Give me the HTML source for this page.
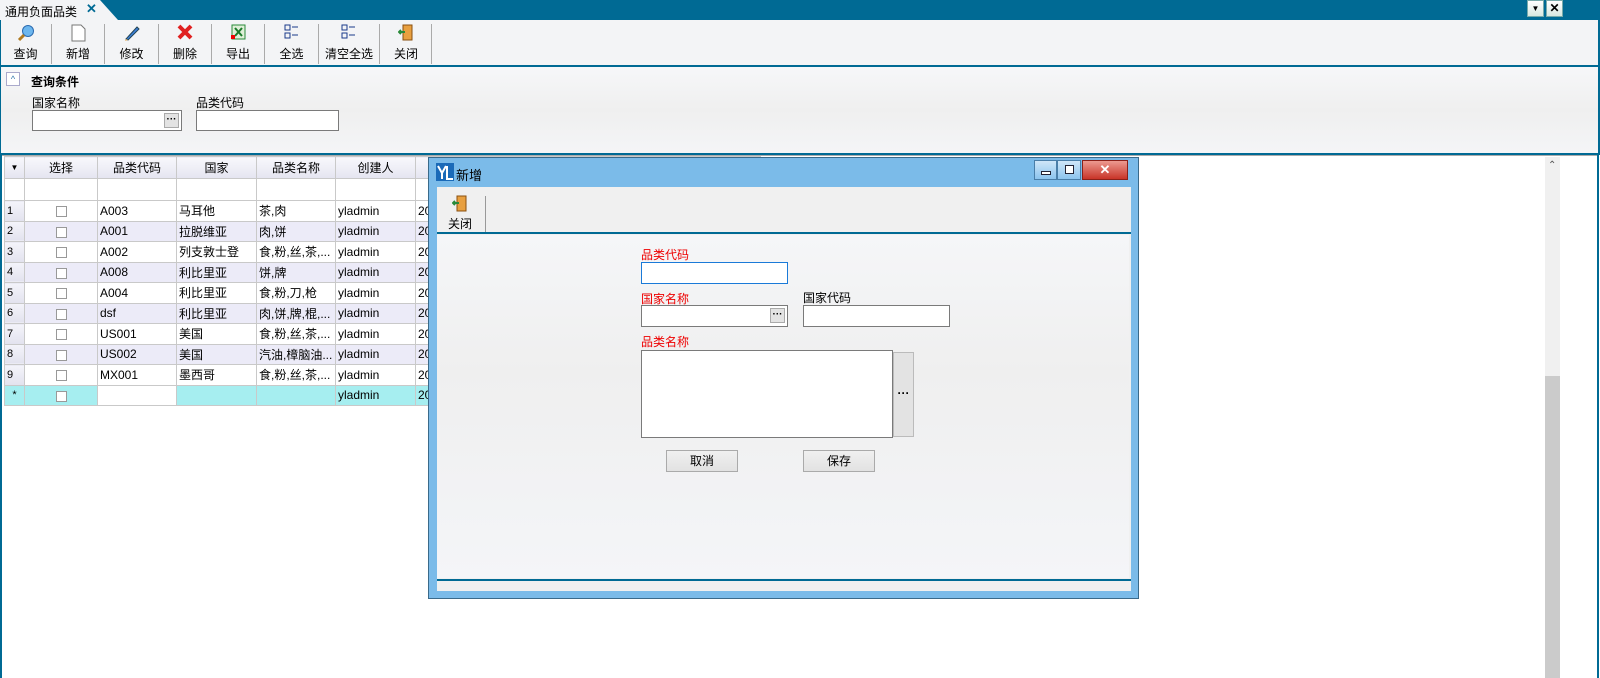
<!DOCTYPE html>
<html><head><meta charset="utf-8"><style>
*{box-sizing:border-box;margin:0;padding:0}
body{width:1600px;height:678px;position:relative;overflow:hidden;background:#fff;font-family:"Liberation Sans","Noto Sans CJK SC",sans-serif;font-size:12px;color:#000}
.a{position:absolute}
.tb{left:0;top:0;width:1600px;height:20px;background:#006a94}
.tab{left:0;top:0;width:118px;height:20px;background:#f3f4f6;clip-path:polygon(0 0,100px 0,118px 20px,0 20px)}
.btn{position:absolute;top:22px;height:42px;text-align:center;font-size:12px}
.btn .t{position:absolute;bottom:2px;left:0;right:0}
.sep{position:absolute;top:24px;width:1px;height:40px;background:#aaa}
.hl{background:#006a94;height:2px}
input{font:inherit}
.box{position:absolute;background:#fff;border:1px solid #7a7a7a}
.dots{position:absolute;background:#e3e3e3;border:1px solid #aaa;font-size:10px;text-align:center;line-height:12px;font-weight:bold}
table{border-collapse:collapse;position:absolute;left:4px;top:156px;table-layout:fixed}
td{border:1px solid #c9c9c9;height:20.5px;padding:0 2px;white-space:nowrap;overflow:hidden;font-size:12px}
.hd td{background:linear-gradient(#f8f8fc,#e4e4f0);text-align:center;height:22px}
.flt td{background:#fff;height:22px}
.ri{background:linear-gradient(#f4f4fa,#e2e2ee);font-size:11px;padding-left:2px}
.ev td{background:#ecebf8}
.ev td.ri{background:linear-gradient(#f4f4fa,#e2e2ee)}
.nw td{background:#a6eef0}
.cb{display:inline-block;width:11px;height:11px;border:1px solid #999;background:#fff;vertical-align:middle}
.red{color:#e00}
.gb{position:absolute;background:linear-gradient(#f0f0f0,#e2e2e2);border:1px solid #aaa;text-align:center;line-height:20px}
</style></head><body>
<div class="a tb"></div>
<div class="a tab"></div>
<div class="a" style="left:5px;top:3px;font-size:12px">通用负面品类</div>
<div class="a" style="left:86px;top:1px;color:#006a94;font-weight:bold;font-size:13px">✕</div>
<div class="a" style="left:1527px;top:0;width:17px;height:17px;background:linear-gradient(#fff,#d8e8e0);border:1px solid #7aa;font-size:8px;text-align:center;line-height:15px">▼</div>
<div class="a" style="left:1546px;top:0;width:17px;height:17px;background:linear-gradient(#fff,#d8e8e0);border:1px solid #7aa;font-weight:bold;text-align:center;line-height:15px">✕</div>
<div class="a" style="left:0;top:20px;width:1600px;height:45px;background:#f3f4f6;border-left:1px solid #006a94;border-right:2px solid #006a94"></div>
<div class="btn" style="left:0;width:51px"><svg class="a" style="left:17px;top:2px" width="18" height="18"><circle cx="11" cy="7" r="5.5" fill="#6cb6ee" stroke="#2a6ab0"/><path d="M7 11L2 16" stroke="#b07a20" stroke-width="3"/></svg><div class="t">查询</div></div>
<div class="sep" style="left:51px"></div>
<div class="btn" style="left:52px;width:52px"><svg class="a" style="left:19px;top:2px" width="16" height="18"><path d="M1 1h9l4 4v12H1z" fill="#fff" stroke="#777"/></svg><div class="t">新增</div></div>
<div class="sep" style="left:104px"></div>
<div class="btn" style="left:105px;width:53px"><svg class="a" style="left:18px;top:2px" width="18" height="18"><path d="M3 15L14 3l2 2L5 16z" fill="#3b7fd8" stroke="#245"/><path d="M3 15l-1 2 3-1z" fill="#e8b060"/></svg><div class="t">修改</div></div>
<div class="sep" style="left:158px"></div>
<div class="btn" style="left:159px;width:52px"><svg class="a" style="left:18px;top:2px" width="16" height="16"><path d="M2 2L14 14M14 2L2 14" stroke="#e02020" stroke-width="4"/></svg><div class="t">删除</div></div>
<div class="sep" style="left:211px"></div>
<div class="btn" style="left:212px;width:52px"><svg class="a" style="left:18px;top:2px" width="16" height="18"><rect x="2" y="1" width="13" height="14" fill="#dff0d8" stroke="#2a8a3a"/><path d="M5 4l7 8M12 4l-7 8" stroke="#1a7a2a" stroke-width="2"/><rect x="1" y="11" width="4" height="4" fill="#e00"/></svg><div class="t">导出</div></div>
<div class="sep" style="left:264px"></div>
<div class="btn" style="left:265px;width:53px"><svg class="a" style="left:19px;top:2px" width="16" height="16"><rect x="1" y="1" width="5" height="5" fill="none" stroke="#1a3a8a"/><rect x="1" y="9" width="5" height="5" fill="none" stroke="#1a3a8a"/><path d="M8 3h6M8 11h6" stroke="#1a3a8a"/></svg><div class="t">全选</div></div>
<div class="sep" style="left:318px"></div>
<div class="btn" style="left:319px;width:60px"><svg class="a" style="left:22px;top:2px" width="16" height="16"><rect x="1" y="1" width="5" height="5" fill="none" stroke="#1a3a8a"/><rect x="1" y="9" width="5" height="5" fill="none" stroke="#1a3a8a"/><path d="M8 3h6M8 11h6" stroke="#1a3a8a"/></svg><div class="t">清空全选</div></div>
<div class="sep" style="left:379px"></div>
<div class="btn" style="left:380px;width:52px"><svg class="a" style="left:18px;top:2px" width="16" height="18"><rect x="5" y="1" width="9" height="15" fill="#e8a040" stroke="#8a5010"/><path d="M1 8h6M3 6L1 8l2 2" stroke="#2a8a3a" stroke-width="2" fill="none"/></svg><div class="t">关闭</div></div>
<div class="sep" style="left:431px"></div>
<div class="a hl" style="left:0;top:65px;width:1600px"></div>
<div class="a" style="left:0;top:67px;width:1600px;height:86px;background:linear-gradient(#f6f7f9,#efefef 50%,#f4f5f7);border-left:1px solid #006a94;border-right:2px solid #006a94"></div>
<div class="a" style="left:6px;top:72px;width:14px;height:14px;border:1px solid #aac;background:#fff;font-size:9px;text-align:center;line-height:12px;color:#37a">^</div>
<div class="a" style="left:31px;top:73px;font-weight:bold">查询条件</div>
<div class="a" style="left:32px;top:94px">国家名称</div>
<div class="box" style="left:32px;top:110px;width:150px;height:21px"></div>
<div class="dots" style="left:164px;top:113px;width:15px;height:15px">···</div>
<div class="a" style="left:196px;top:94px">品类代码</div>
<div class="box" style="left:196px;top:110px;width:143px;height:21px"></div>
<div class="a hl" style="left:0;top:153px;width:1600px"></div>
<div class="a" style="left:0;top:155px;width:2px;height:523px;background:#006a94"></div>
<div class="a" style="left:1597px;top:155px;width:2px;height:523px;background:#006a94"></div>
<div class="a" style="left:2px;top:155px;width:1595px;height:1px;background:#aaa"></div>
<div class="a" style="left:1545px;top:157px;width:15px;height:521px;background:#f0f0f0"></div>
<div class="a" style="left:1545px;top:376px;width:15px;height:302px;background:#cbcbcb"></div>
<div class="a" style="left:1548px;top:160px;font-size:10px;color:#555">⌃</div>
<table>
<colgroup><col style="width:20px"><col style="width:73px"><col style="width:79px"><col style="width:80px"><col style="width:79px"><col style="width:80px"><col style="width:117px"><col style="width:80px"><col style="width:148px"></colgroup>
<tr class="hd"><td style="font-size:8px">▼</td><td>选择</td><td>品类代码</td><td>国家</td><td>品类名称</td><td>创建人</td><td></td><td></td><td></td></tr>
<tr class="flt"><td class="ri"></td><td></td><td></td><td></td><td></td><td></td><td></td><td></td><td></td></tr>
<tr><td class="ri">1</td><td align="center"><span class="cb"></span></td><td>A003</td><td>马耳他</td><td>茶,肉</td><td>yladmin</td><td>20</td><td></td><td></td></tr>
<tr class="ev"><td class="ri">2</td><td align="center"><span class="cb"></span></td><td>A001</td><td>拉脱维亚</td><td>肉,饼</td><td>yladmin</td><td>20</td><td></td><td></td></tr>
<tr><td class="ri">3</td><td align="center"><span class="cb"></span></td><td>A002</td><td>列支敦士登</td><td>食,粉,丝,茶,...</td><td>yladmin</td><td>20</td><td></td><td></td></tr>
<tr class="ev"><td class="ri">4</td><td align="center"><span class="cb"></span></td><td>A008</td><td>利比里亚</td><td>饼,牌</td><td>yladmin</td><td>20</td><td></td><td></td></tr>
<tr><td class="ri">5</td><td align="center"><span class="cb"></span></td><td>A004</td><td>利比里亚</td><td>食,粉,刀,枪</td><td>yladmin</td><td>20</td><td></td><td></td></tr>
<tr class="ev"><td class="ri">6</td><td align="center"><span class="cb"></span></td><td>dsf</td><td>利比里亚</td><td>肉,饼,牌,棍,...</td><td>yladmin</td><td>20</td><td></td><td></td></tr>
<tr><td class="ri">7</td><td align="center"><span class="cb"></span></td><td>US001</td><td>美国</td><td>食,粉,丝,茶,...</td><td>yladmin</td><td>20</td><td></td><td></td></tr>
<tr class="ev"><td class="ri">8</td><td align="center"><span class="cb"></span></td><td>US002</td><td>美国</td><td>汽油,樟脑油...</td><td>yladmin</td><td>20</td><td></td><td></td></tr>
<tr><td class="ri">9</td><td align="center"><span class="cb"></span></td><td>MX001</td><td>墨西哥</td><td>食,粉,丝,茶,...</td><td>yladmin</td><td>20</td><td></td><td></td></tr>
<tr class="nw"><td class="ri" style="text-align:center">*</td><td align="center"><span class="cb"></span></td><td style="background:#fff"></td><td></td><td></td><td>yladmin</td><td>20</td><td></td><td></td></tr>
</table>
<!-- dialog -->
<div class="a" style="left:428px;top:157px;width:711px;height:442px;background:#7bbbe9;border:1px solid #3a6a8a"></div>
<div class="a" style="left:437px;top:187px;width:694px;height:404px;background:#f0f0f0"></div>
<div class="a" style="left:437px;top:235px;width:692px;height:343px;background:linear-gradient(#f5f6f8,#efefef 40%,#f4f5f8)"></div>
<svg class="a" style="left:436px;top:163px" width="18" height="18"><rect width="18" height="18" fill="#1a6ab8"/><path d="M2 3l4 7v6M10 3L6 10M11 3v13h6" stroke="#fff" stroke-width="2" fill="none"/></svg>
<div class="a" style="left:456px;top:165px;font-size:13px">新增</div>
<div class="a" style="left:1034px;top:160px;width:23px;height:20px;background:linear-gradient(#cfe6f8,#8cc4ee);border:1px solid #4a7ea8"><div class="a" style="left:6px;top:10px;width:10px;height:4px;border:1px solid #223;background:#fff"></div></div>
<div class="a" style="left:1057px;top:160px;width:24px;height:20px;background:linear-gradient(#cfe6f8,#8cc4ee);border:1px solid #4a7ea8"><div class="a" style="left:7px;top:4px;width:9px;height:9px;border:1px solid #223;background:#fff"></div></div>
<div class="a" style="left:1082px;top:160px;width:46px;height:20px;background:linear-gradient(#ec9a90,#c83428);border:1px solid #8a2018;color:#fff;font-weight:bold;text-align:center;line-height:18px;font-size:13px">✕</div>
<svg class="a" style="left:452px;top:195px" width="16" height="18"><rect x="5" y="1" width="9" height="15" fill="#e8a040" stroke="#8a5010"/><path d="M1 8h6M3 6L1 8l2 2" stroke="#2a8a3a" stroke-width="2" fill="none"/></svg>
<div class="a" style="left:448px;top:215px">关闭</div>
<div class="a" style="left:485px;top:196px;width:1px;height:37px;background:#999"></div>
<div class="a hl" style="left:437px;top:232px;width:694px"></div>
<div class="a hl" style="left:437px;top:579px;width:694px"></div>
<div class="a red" style="left:641px;top:246px">品类代码</div>
<div class="box" style="left:641px;top:262px;width:147px;height:22px;border-color:#1a7ad8"></div>
<div class="a red" style="left:641px;top:290px">国家名称</div>
<div class="box" style="left:641px;top:305px;width:147px;height:22px"></div>
<div class="dots" style="left:770px;top:308px;width:15px;height:15px">···</div>
<div class="a" style="left:803px;top:289px">国家代码</div>
<div class="box" style="left:803px;top:305px;width:147px;height:22px"></div>
<div class="a red" style="left:641px;top:333px">品类名称</div>
<div class="box" style="left:641px;top:350px;width:252px;height:88px"></div>
<div class="a" style="left:893px;top:352px;width:21px;height:85px;background:#e3e3e3;border:1px solid #bbb;text-align:center;line-height:80px;font-weight:bold">···</div>
<div class="gb" style="left:666px;top:450px;width:72px;height:22px">取消</div>
<div class="gb" style="left:803px;top:450px;width:72px;height:22px">保存</div>
</body></html>
